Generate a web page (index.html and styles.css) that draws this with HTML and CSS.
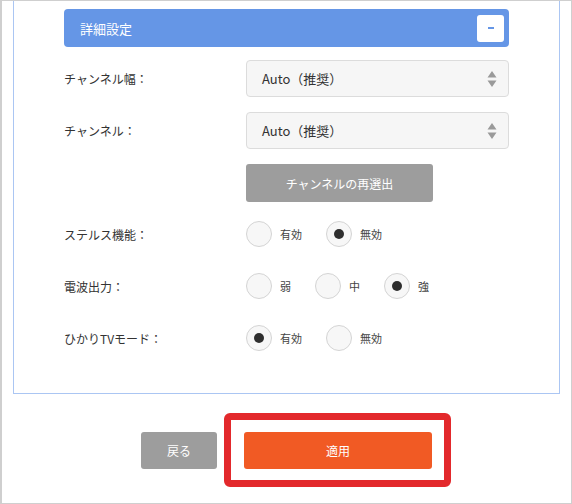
FILE: index.html
```html
<!DOCTYPE html>
<html lang="ja">
<head>
<meta charset="utf-8">
<link rel="stylesheet" href="styles.css">
</head>
<body>
<div class="frame">
  <div class="panel">
    <div class="section-head">
      <span class="section-title">詳細設定</span>
      <span class="toggle"><span class="dash"></span></span>
    </div>

    <div class="row row-select first">
      <div class="label">チャンネル幅：</div>
      <div class="select">
        <span>Auto（推奨）</span>
        <svg class="arrows" width="10" height="16" viewBox="0 0 10 16"><path d="M5 0 L9.5 6.5 H0.5 Z M5 16 L9.5 9.5 H0.5 Z" fill="#9a9a9a"/></svg>
      </div>
    </div>

    <div class="row row-select">
      <div class="label">チャンネル：</div>
      <div class="select">
        <span>Auto（推奨）</span>
        <svg class="arrows" width="10" height="16" viewBox="0 0 10 16"><path d="M5 0 L9.5 6.5 H0.5 Z M5 16 L9.5 9.5 H0.5 Z" fill="#9a9a9a"/></svg>
      </div>
    </div>

    <div class="row row-btn">
      <div class="label"></div>
      <div class="rescan">チャンネルの再選出</div>
    </div>

    <div class="row row-radio stealth">
      <div class="label">ステルス機能：</div>
      <div class="opts">
        <span class="opt"><span class="circle"></span><span class="opt-text">有効</span></span>
        <span class="opt"><span class="circle on"></span><span class="opt-text">無効</span></span>
      </div>
    </div>

    <div class="row row-radio">
      <div class="label">電波出力：</div>
      <div class="opts">
        <span class="opt"><span class="circle"></span><span class="opt-text">弱</span></span>
        <span class="opt"><span class="circle"></span><span class="opt-text">中</span></span>
        <span class="opt"><span class="circle on"></span><span class="opt-text">強</span></span>
      </div>
    </div>

    <div class="row row-radio">
      <div class="label">ひかりTVモード：</div>
      <div class="opts">
        <span class="opt"><span class="circle on"></span><span class="opt-text">有効</span></span>
        <span class="opt"><span class="circle"></span><span class="opt-text">無効</span></span>
      </div>
    </div>
  </div>

  <div class="actions">
    <div class="btn back">戻る</div>
    <div class="btn apply">適用<span class="highlight"></span></div>
  </div>
</div>
</body>
</html>
```

FILE: styles.css
```css
html, body {
  margin: 0;
  padding: 0;
  background: #fff;
}
body {
  font-family: "Noto Sans CJK JP", "Noto Sans", sans-serif;
  color: #333;
}
.frame {
  box-sizing: border-box;
  width: 572px;
  height: 504px;
  border: 1px solid #cfcfcf;
  border-left-width: 2px;
  overflow: hidden;
}
.panel {
  box-sizing: border-box;
  width: 547px;
  margin-left: 11px;
  height: 393px;
  border: 1px solid #abc6f3;
  border-top: none;
  padding: 8px 50px 0 50px;
}
.section-head {
  height: 38px;
  background: #6596e6;
  border-radius: 4px;
  display: flex;
  align-items: center;
  justify-content: space-between;
  padding: 0 5px 0 16px;
}
.section-title {
  color: #fff;
  font-size: 13px;
}
.toggle {
  width: 27px;
  height: 27px;
  background: #fff;
  border-radius: 3px;
  display: flex;
  align-items: center;
  justify-content: center;
}
.dash {
  width: 6px;
  height: 2px;
  background: #6596e6;
}
.row {
  display: flex;
  align-items: center;
}
.label {
  width: 182px;
  flex: none;
  font-size: 12px;
  color: #333;
}
.row-select.first { margin-top: 13px; }
.row-select { margin-top: 15px; }
.select {
  box-sizing: border-box;
  flex: 1;
  height: 37px;
  background: #f6f6f6;
  border: 1px solid #dcdcdc;
  border-radius: 4px;
  display: flex;
  align-items: center;
  justify-content: space-between;
  padding: 0 11px 0 15px;
  font-size: 13px;
  color: #333;
}
.arrows { display: block; }
.row-btn { margin-top: 15px; }
.rescan {
  width: 187px;
  height: 38px;
  background: #9d9d9d;
  border-radius: 3px;
  color: #fff;
  font-size: 12px;
  display: flex;
  align-items: center;
  justify-content: center;
}
.row-radio { margin-top: 26px; height: 26px; }
.row-radio.stealth { margin-top: 19px; }
.opts {
  display: flex;
  align-items: center;
}
.opt {
  display: flex;
  align-items: center;
  margin-right: 24px;
}
.circle {
  box-sizing: border-box;
  width: 26px;
  height: 26px;
  border-radius: 50%;
  border: 1px solid #d4d4d4;
  background: #f7f7f7;
  display: flex;
  align-items: center;
  justify-content: center;
}
.circle.on::after {
  content: "";
  width: 10px;
  height: 10px;
  border-radius: 50%;
  background: #2e2e2e;
}
.opt-text {
  margin-left: 8px;
  font-size: 11px;
  color: #444;
}
.actions {
  display: flex;
  justify-content: center;
  gap: 27px;
  margin-top: 38px;
}
.btn {
  height: 37px;
  border-radius: 3px;
  color: #fff;
  font-size: 12px;
  display: flex;
  align-items: center;
  justify-content: center;
}
.back {
  width: 76px;
  background: #9d9d9d;
}
.apply {
  width: 188px;
  background: #f15a24;
  position: relative;
}
.highlight {
  position: absolute;
  left: -20px;
  right: -19px;
  top: -19px;
  bottom: -18px;
  border: 7px solid #e3292c;
  border-radius: 6px;
}
```
